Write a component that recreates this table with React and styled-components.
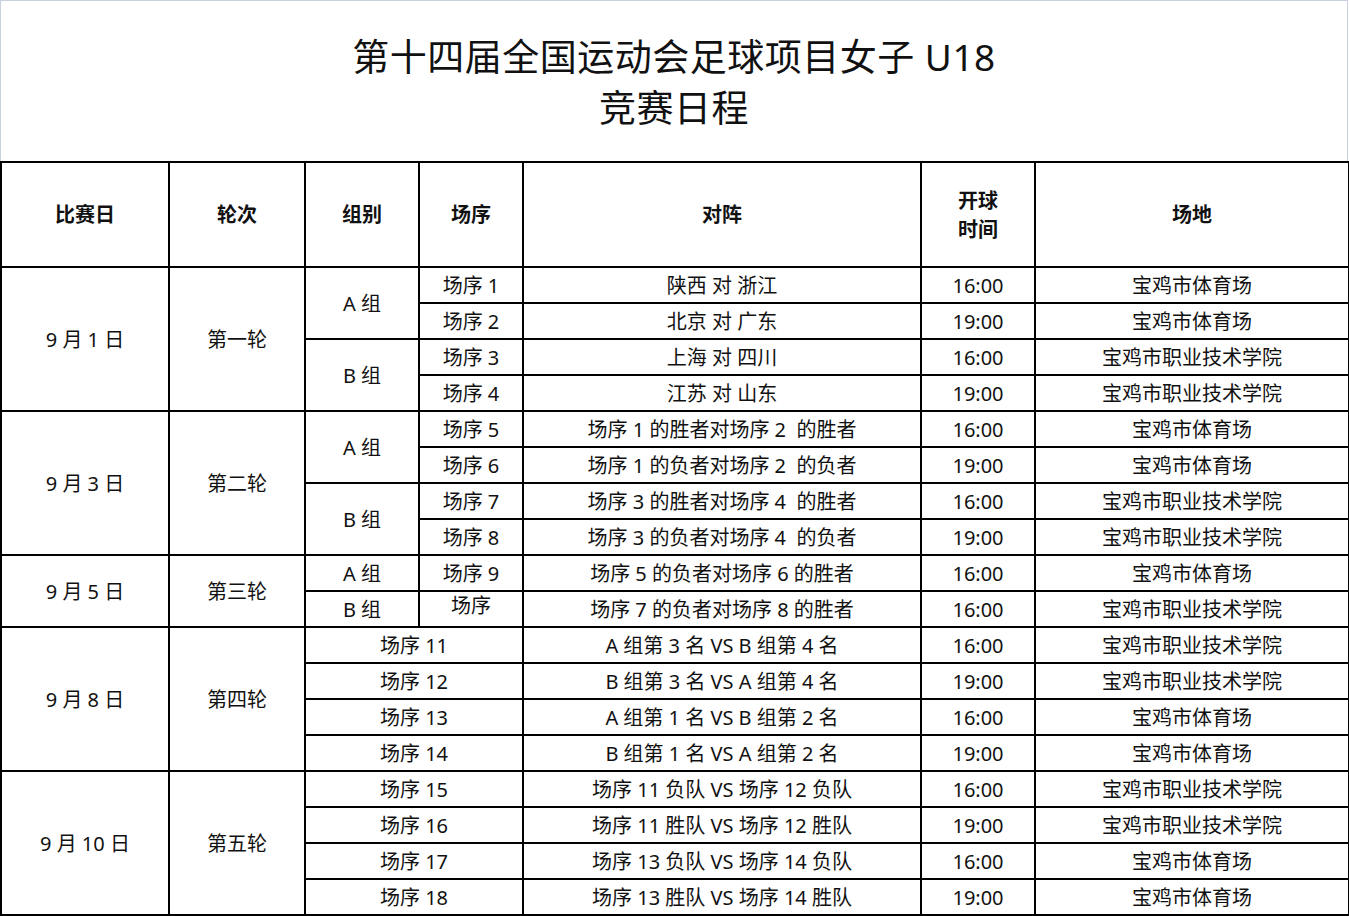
import React from "react";
import styled, { createGlobalStyle } from "styled-components";

const GlobalStyle = createGlobalStyle`
  body {
    margin: 0;
    background: #fff;
    font-family: "Noto Sans", "Noto Sans CJK SC", sans-serif;
    color: #111;
  }
`;

const StyledPage = styled.div`
  width: 1348px;
  display: flex;
  flex-direction: column;
`;

const TitleBox = styled.div`
  height: 161px;
  box-sizing: border-box;
  border: 1px solid #c8d0e2;
  border-bottom: none;
  display: flex;
  flex-direction: column;
  align-items: center;
  justify-content: center;
  padding-top: 2px;

  h1 {
    margin: 0;
    font-weight: 400;
    font-size: 37px;
    line-height: 51px;
    text-align: center;
    font-family: "Noto Sans", "Noto Sans CJK SC", sans-serif;
    letter-spacing: 0.5px;
  }
`;

const Schedule = styled.table`
  width: 1348px;
  table-layout: fixed;
  border-collapse: collapse;
  font-size: 20px;

  td,
  th {
    border: 2px solid #000;
    text-align: center;
    vertical-align: middle;
    padding: 0;
    white-space: pre;
    line-height: 26px;
  }

  td {
    padding-top: 2px;
  }

  th {
    height: 103px;
    font-weight: 700;
    font-size: 20px;
    line-height: 29px;
  }
`;

const Row = styled.tr`
  height: 36px;
`;

const Cell = styled.td`
  && {
    padding: ${(p) => (p.$lift ? "0 0 6px" : "2px 0 0")};
  }
`;

const widths = [168, 136, 114, 104, 398, 114, 314];

const GYM = "宝鸡市体育场";
const COLLEGE = "宝鸡市职业技术学院";

const days = [
  {
    date: "9 月 1 日",
    round: "第一轮",
    groups: [
      {
        name: "A 组",
        matches: [
          ["场序 1", "陕西 对 浙江", "16:00", GYM],
          ["场序 2", "北京 对 广东", "19:00", GYM],
        ],
      },
      {
        name: "B 组",
        matches: [
          ["场序 3", "上海 对 四川", "16:00", COLLEGE],
          ["场序 4", "江苏 对 山东", "19:00", COLLEGE],
        ],
      },
    ],
  },
  {
    date: "9 月 3 日",
    round: "第二轮",
    groups: [
      {
        name: "A 组",
        matches: [
          ["场序 5", "场序 1 的胜者对场序 2  的胜者", "16:00", GYM],
          ["场序 6", "场序 1 的负者对场序 2  的负者", "19:00", GYM],
        ],
      },
      {
        name: "B 组",
        matches: [
          ["场序 7", "场序 3 的胜者对场序 4  的胜者", "16:00", COLLEGE],
          ["场序 8", "场序 3 的负者对场序 4  的负者", "19:00", COLLEGE],
        ],
      },
    ],
  },
  {
    date: "9 月 5 日",
    round: "第三轮",
    groups: [
      {
        name: "A 组",
        matches: [["场序 9", "场序 5 的负者对场序 6 的胜者", "16:00", GYM]],
      },
      {
        name: "B 组",
        matches: [["场序", "场序 7 的负者对场序 8 的胜者", "16:00", COLLEGE, true]],
      },
    ],
  },
  {
    date: "9 月 8 日",
    round: "第四轮",
    matches: [
      ["场序 11", "A 组第 3 名 VS B 组第 4 名", "16:00", COLLEGE],
      ["场序 12", "B 组第 3 名 VS A 组第 4 名", "19:00", COLLEGE],
      ["场序 13", "A 组第 1 名 VS B 组第 2 名", "16:00", GYM],
      ["场序 14", "B 组第 1 名 VS A 组第 2 名", "19:00", GYM],
    ],
  },
  {
    date: "9 月 10 日",
    round: "第五轮",
    matches: [
      ["场序 15", "场序 11 负队 VS 场序 12 负队", "16:00", COLLEGE],
      ["场序 16", "场序 11 胜队 VS 场序 12 胜队", "19:00", COLLEGE],
      ["场序 17", "场序 13 负队 VS 场序 14 负队", "16:00", GYM],
      ["场序 18", "场序 13 胜队 VS 场序 14 胜队", "19:00", GYM],
    ],
  },
];

function buildRows() {
  const rows = [];
  days.forEach((day, di) => {
    const total = day.groups
      ? day.groups.reduce((n, g) => n + g.matches.length, 0)
      : day.matches.length;
    let first = true;
    const dayCells = () =>
      first ? (
        <>
          <td rowSpan={total}>{day.date}</td>
          <td rowSpan={total}>{day.round}</td>
        </>
      ) : null;

    if (day.groups) {
      day.groups.forEach((g, gi) => {
        g.matches.forEach((m, mi) => {
          rows.push(
            <Row key={`${di}-${gi}-${mi}`}>
              {dayCells()}
              {mi === 0 && <td rowSpan={g.matches.length}>{g.name}</td>}
              <Cell $lift={m[4]}>{m[0]}</Cell>
              <td>{m[1]}</td>
              <td>{m[2]}</td>
              <td>{m[3]}</td>
            </Row>
          );
          first = false;
        });
      });
    } else {
      day.matches.forEach((m, mi) => {
        rows.push(
          <Row key={`${di}-${mi}`}>
            {dayCells()}
            <td colSpan={2}>{m[0]}</td>
            <td>{m[1]}</td>
            <td>{m[2]}</td>
            <td>{m[3]}</td>
          </Row>
        );
        first = false;
      });
    }
  });
  return rows;
}

export default function App() {
  return (
    <StyledPage>
      <GlobalStyle />
      <TitleBox>
        <h1>第十四届全国运动会足球项目女子 U18</h1>
        <h1>竞赛日程</h1>
      </TitleBox>
      <Schedule>
        <colgroup>
          {widths.map((w, i) => (
            <col key={i} style={{ width: w }} />
          ))}
        </colgroup>
        <thead>
          <tr>
            <th>比赛日</th>
            <th>轮次</th>
            <th>组别</th>
            <th>场序</th>
            <th>对阵</th>
            <th>
              开球
              <br />
              时间
            </th>
            <th>场地</th>
          </tr>
        </thead>
        <tbody>{buildRows()}</tbody>
      </Schedule>
    </StyledPage>
  );
}
